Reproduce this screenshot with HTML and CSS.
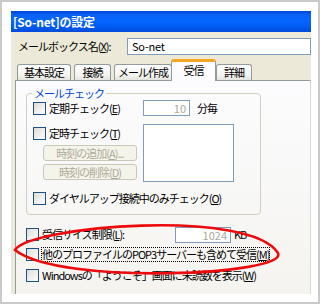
FILE: index.html
```html
<!DOCTYPE html>
<html>
  <head>
    <meta charset="utf-8">
    <title>[So-net]の設定</title>
    <link rel="stylesheet" href="styles.css">
  </head>
  <body>
    <div class="frame">
      <div class="dlg">
        <div class="title">[So-net]の設定</div>
        <div class="body">
          <div class="namerow">
            <span class="lbl">メールボックス名(<u>X</u>):</span>
            <span class="field">So-net</span>
          </div>

          <div class="tabs">
            <span class="tab t1">基本設定</span>
            <span class="tab t2">接続</span>
            <span class="tab t3">メール作成</span>
            <span class="tab on">受信</span>
            <span class="tab t5">詳細</span>
          </div>

          <div class="panel">
            <div class="grp">
              <span class="legend">メールチェック</span>
              <div class="grid">
                <label class="chk"><i class="box"></i>定期チェック(<u>E</u>)</label>
                <div class="every"><span class="num">10</span><span>分毎</span></div>

                <div class="leftcol">
                  <label class="chk"><i class="box"></i>定時チェック(<u>T</u>)</label>
                  <span class="btn">時刻の追加(<u>A</u>)...</span>
                  <span class="btn">時刻の削除(<u>D</u>)</span>
                </div>
                <div class="list"></div>

                <label class="chk wide"><i class="box"></i>ダイヤルアップ接続中のみチェック(<u>O</u>)</label>
              </div>
            </div>

            <div class="sizerow">
              <label class="chk"><i class="box"></i>受信サイズ制限(<u>L</u>):</label>
              <span class="num size">1024</span>
              <span>KB</span>
            </div>
            <label class="chk row"><i class="box"></i><span class="focus">他のプロファイルのPOP3サーバーも含めて受信(<u>M</u>)</span></label>
            <label class="chk row"><i class="box"></i>Windowsの「ようこそ」画面に未読数を表示(<u>W</u>)</label>
          </div>
        </div>
      </div>

      <svg class="mark" width="320" height="304" viewBox="0 0 320 304">
        <path d="M15,250 C30,226 250,208 278,253 C290,275 60,286 15,250 Z" fill="none" stroke="#ee0a0a" stroke-width="2.6"/>
      </svg>
    </div>
  </body>
</html>
```

FILE: styles.css
```css
body        {margin:0; background:#fff;}

.frame      {position:relative; width:320px; height:304px; box-sizing:border-box;
             border:2px solid #cacaca; padding:9px 7px 8px 9px; background:#fff;}

.dlg        {width:300px; height:283px; overflow:hidden; background:#ece9d8;
             font-family:"Noto Sans CJK JP", sans-serif; font-size:11px; line-height:13px;
             letter-spacing:-1px; color:#000;}

.title      {height:21px; padding-left:2px; color:#fff; font-weight:bold; font-size:12px;
             line-height:21px; letter-spacing:-0.2px;
             background:linear-gradient(#0046d8 0%, #0a62f5 20%, #0266ff 50%, #0058ee 80%, #004ad9 100%);}

.body       {padding-top:6px;}

/* mailbox name */
.namerow    {display:flex; align-items:center; height:17px;}
.lbl        {width:109px; padding-left:7px;}
.field      {flex:1; height:15px; border:1px solid #7f9db9; background:#fff; padding-left:4px;
             line-height:15px; letter-spacing:-0.2px;}

/* tabs */
.tabs       {display:flex; align-items:flex-end; height:20px; margin-top:5px; padding-left:6px;}
.tab        {height:15px; border:1px solid #919b9c; border-bottom:none; border-radius:3px 3px 0 0;
             background:linear-gradient(#fff, #f3f3ef 70%, #e4e3dc); text-align:center;
             line-height:15px; margin-right:3px; box-sizing:content-box;}
.t1         {width:52px;}
.t2         {width:35px;}
.t3         {width:56px; margin-right:-1px;}
.tab.on     {width:43px; height:19px; background:#fcfcfe; border-top:3px solid #f5a623;
             line-height:17px; position:relative; top:1px; margin-right:0; border-radius:3px 3px 0 0;}
.t5         {width:34px;}

/* tab page */
.panel      {margin-left:4px; height:214px; border:1px solid #919b9c; border-right-color:#d8d8d4;
             background:linear-gradient(#fcfcfe, #f4f3ee); padding:12px 0 0 10px;}

.grp        {position:relative; width:227px; border:1px solid #d0d0bf; border-radius:4px;
             padding:6px 0 8px 6px;}
.legend     {position:absolute; left:5px; top:-8px; padding:0 2px; color:#0046d5;
             background:#fcfcfe; line-height:14px;}

.grid       {display:grid; grid-template-columns:110px 91px; row-gap:8px; align-items:start;}
.leftcol    {display:flex; flex-direction:column; align-items:flex-start;}
.wide       {grid-column:1 / 3;}

.chk        {display:flex; align-items:center; height:16px; white-space:nowrap;}
.box        {display:block; width:11px; height:11px; margin-right:3px; border:1px solid #1c5180;
             background:linear-gradient(135deg, #dcdcd7, #fff);}

.every      {display:flex; align-items:center; gap:7px; height:16px;}
.num        {display:block; width:42px; height:14px; border:1px solid #7f9db9; background:#fff;
             color:#aca899; text-align:right; padding-right:3px; line-height:14px; letter-spacing:0;}
.list       {height:56px; border:1px solid #7f9db9; background:#fff;}

.btn        {display:block; width:92px; height:14px; margin-left:10px; border:1px solid #c9c7ba;
             border-radius:3px; background:#f5f4ea; color:#aca899; text-align:center; line-height:14px;}
.leftcol .chk {margin-top:1px; margin-bottom:4px;}
.leftcol .btn + .btn {margin-top:3px;}

.sizerow    {display:flex; align-items:center; height:17px; margin-top:11px;}
.sizerow .chk {width:149px;}
.size       {width:51px; margin-right:3px;}
.row        {margin-top:3px;}
.row + .row {margin-top:5px;}
.focus      {outline:1px dotted #000; outline-offset:0;}

.mark       {position:absolute; left:-2px; top:-2px; pointer-events:none;}
```
